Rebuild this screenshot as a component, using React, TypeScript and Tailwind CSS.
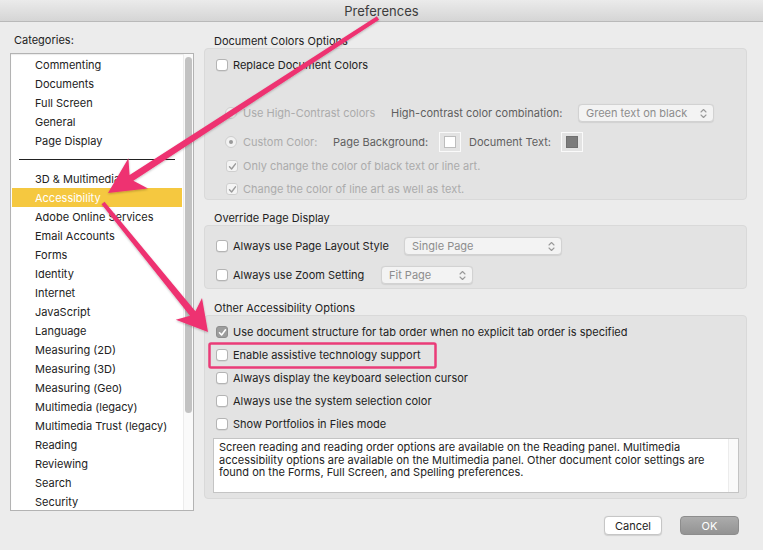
import React from "react";

const FONT = "font-['Inter','Liberation_Sans',Arial,sans-serif]";

function Check({ state = "off" }: { state?: "off" | "on" | "dis-on" }) {
  if (state === "on") {
    return (
      <span className="w-[12px] h-[12px] rounded-[3px] bg-[#9d9d9d] border border-[#8e8e8e] flex items-center justify-center shrink-0">
        <svg width="9" height="9" viewBox="0 0 9 9">
          <path d="M1.5 4.8 L3.6 7 L7.5 1.8" stroke="#fff" strokeWidth="1.6" fill="none" strokeLinecap="round" strokeLinejoin="round" />
        </svg>
      </span>
    );
  }
  if (state === "dis-on") {
    return (
      <span className="w-[12px] h-[12px] rounded-[3px] bg-[#f4f4f4] border border-[#cfcfcf] flex items-center justify-center shrink-0">
        <svg width="9" height="9" viewBox="0 0 9 9">
          <path d="M1.5 4.8 L3.6 7 L7.5 1.8" stroke="#9a9a9a" strokeWidth="1.4" fill="none" strokeLinecap="round" strokeLinejoin="round" />
        </svg>
      </span>
    );
  }
  return <span className="w-[12px] h-[12px] rounded-[3px] bg-white border border-[#b4b4b4] shadow-[0_0.5px_0.5px_rgba(0,0,0,0.12)] shrink-0" />;
}

function Radio({ dot = false }: { dot?: boolean }) {
  return (
    <span className="w-[12px] h-[12px] rounded-full bg-[#f2f2f2] border border-[#cdcdcd] flex items-center justify-center shrink-0">
      {dot && <span className="w-[4px] h-[4px] rounded-full bg-[#9a9a9a]" />}
    </span>
  );
}

function Updown() {
  return (
    <svg width="7" height="11" viewBox="0 0 7 11">
      <path d="M1 4 L3.5 1.5 L6 4" stroke="#9a9a9a" strokeWidth="1.1" fill="none" strokeLinecap="round" strokeLinejoin="round" />
      <path d="M1 7 L3.5 9.5 L6 7" stroke="#9a9a9a" strokeWidth="1.1" fill="none" strokeLinecap="round" strokeLinejoin="round" />
    </svg>
  );
}

function Select({ label, w }: { label: string; w: string }) {
  return (
    <div className={`${w} h-[18px] rounded-[4px] border border-[#d2d2d2] bg-[#f3f3f3] shadow-[0_0.5px_1px_rgba(0,0,0,0.08)] flex items-center justify-between pl-[7px] pr-[6px] text-[#8d8d8d] text-[11px]`}>
      <span>{label}</span>
      <Updown />
    </div>
  );
}

function Swatch({ fill }: { fill: string }) {
  return (
    <span className="w-[22px] h-[20px] border border-[#fafafa] flex items-center justify-center shrink-0">
      <span className={`w-[12px] h-[12px] border ${fill}`} />
    </span>
  );
}

const items1 = ["Commenting", "Documents", "Full Screen", "General", "Page Display"];
const items2 = [
  "3D & Multimedia",
  "Accessibility",
  "Adobe Online Services",
  "Email Accounts",
  "Forms",
  "Identity",
  "Internet",
  "JavaScript",
  "Language",
  "Measuring (2D)",
  "Measuring (3D)",
  "Measuring (Geo)",
  "Multimedia (legacy)",
  "Multimedia Trust (legacy)",
  "Reading",
  "Reviewing",
  "Search",
  "Security",
];

function Row({ children, className = "" }: { children: React.ReactNode; className?: string }) {
  return <div className={`h-[20px] flex items-center ${className}`}>{children}</div>;
}

export default function App() {
  return (
    <div className={`${FONT} w-[763px] h-[550px] bg-[#ececec] relative overflow-hidden text-[11px] leading-[14px] text-[#222]`}>
      {/* title bar */}
      <div className="h-[22px] bg-gradient-to-b from-[#ebebeb] to-[#d5d5d5] border-b border-[#b9b9b9] flex items-center justify-center text-[13px] text-[#3c3c3c]">
        Preferences
      </div>

      <div className="flex">
        {/* left column */}
        <div className="w-[204px] pl-[10px] pt-[11px]">
          <div className="h-[14px] pl-[4px]">Categories:</div>
          <div className="mt-[6px] w-[184px] h-[458px] border border-[#b3b3b3] bg-white flex shadow-[inset_0_1px_1px_rgba(0,0,0,0.08)]">
            <div className="flex-1 pt-[1px] px-[1px]">
              {items1.map((t) => (
                <div key={t} className="h-[19px] flex items-center pl-[23px]">{t}</div>
              ))}
              <div className="h-[19px] flex items-center pl-[7px]">
                <div className="w-[156px] h-[1px] bg-[#222]" />
              </div>
              {items2.map((t) => (
                <div
                  key={t}
                  className={`h-[19px] flex items-center pl-[23px] ${t === "Accessibility" ? "bg-[#f5c840] text-white" : ""}`}
                >
                  {t}
                </div>
              ))}
            </div>
            <div className="w-[10px] border-l border-[#ececec] bg-[#fafafa] pt-[3px] flex justify-center">
              <div className="w-[7px] h-[356px] rounded-full bg-[#c2c2c2]" />
            </div>
          </div>
        </div>

        {/* right column */}
        <div className="w-[543px] pt-[12px]">
          <div className="h-[14px] pl-[10px]">Document Colors Options</div>
          <div className="h-[152px] rounded-[4px] border border-[#d9d9d9] bg-[#e3e3e3] pt-[6px]">
            <Row className="pl-[11px] gap-[5px]">
              <Check />
              <span>Replace Document Colors</span>
            </Row>
            <Row className="mt-[28px] pl-[20px]">
              <span className="w-[166px] flex items-center gap-[6px]">
                <Radio />
                <span className="text-[#ababab]">Use High-Contrast colors</span>
              </span>
              <span className="w-[187px] text-[#5f5f5f]">High-contrast color combination:</span>
              <Select label="Green text on black" w="w-[136px]" />
            </Row>
            <Row className="mt-[9px] pl-[20px]">
              <span className="w-[108px] flex items-center gap-[6px]">
                <Radio dot />
                <span className="text-[#ababab]">Custom Color:</span>
              </span>
              <span className="w-[106px] text-[#5f5f5f]">Page Background:</span>
              <Swatch fill="bg-white border-[#bdbdbd]" />
              <span className="ml-[8px] w-[92px] text-[#5f5f5f]">Document Text:</span>
              <Swatch fill="bg-[#7b7b7b] border-[#6f6f6f]" />
            </Row>
            <Row className="mt-[4px] pl-[21px] gap-[5px]">
              <Check state="dis-on" />
              <span className="text-[#ababab]">Only change the color of black text or line art.</span>
            </Row>
            <Row className="mt-[3px] pl-[21px] gap-[5px]">
              <Check state="dis-on" />
              <span className="text-[#ababab]">Change the color of line art as well as text.</span>
            </Row>
          </div>

          <div className="mt-[11px] h-[14px] pl-[10px]">Override Page Display</div>
          <div className="h-[64px] rounded-[4px] border border-[#d9d9d9] bg-[#e3e3e3] pt-[10px]">
            <Row className="pl-[11px]">
              <span className="w-[188px] flex items-center gap-[5px]">
                <Check />
                <span>Always use Page Layout Style</span>
              </span>
              <Select label="Single Page" w="w-[158px]" />
            </Row>
            <Row className="mt-[9px] pl-[11px]">
              <span className="w-[165px] flex items-center gap-[5px]">
                <Check />
                <span>Always use Zoom Setting</span>
              </span>
              <Select label="Fit Page" w="w-[92px]" />
            </Row>
          </div>

          <div className="mt-[12px] h-[14px] pl-[10px]">Other Accessibility Options</div>
          <div className="h-[184px] rounded-[4px] border border-[#d9d9d9] bg-[#e3e3e3] pt-[6px]">
            {[
              ["Use document structure for tab order when no explicit tab order is specified", "on"],
              ["Enable assistive technology support", "off"],
              ["Always display the keyboard selection cursor", "off"],
              ["Always use the system selection color", "off"],
              ["Show Portfolios in Files mode", "off"],
            ].map(([t, s], i) => (
              <Row key={t} className={`pl-[11px] gap-[5px] ${i > 0 ? "mt-[3px]" : ""}`}>
                <Check state={s as "on" | "off"} />
                <span>{t}</span>
              </Row>
            ))}
            <div className="mt-[4px] ml-[8px] w-[526px] h-[55px] bg-white border border-[#c4c4c4] flex">
              <div className="flex-1 pl-[5px] pt-[2px] leading-[12.5px] text-[#222]">
                Screen reading and reading order options are available on the Reading panel. Multimedia accessibility options are available on the Multimedia panel. Other document color settings are found on the Forms, Full Screen, and Spelling preferences.
              </div>
              <div className="w-[10px] border-l border-[#ececec] bg-[#fafafa]" />
            </div>
          </div>

          <div className="mt-[17px] flex justify-end gap-[18px] pr-[8px]">
            <button className="w-[58px] h-[19px] rounded-[4px] bg-white border border-[#c6c6c6] shadow-[0_0.5px_1px_rgba(0,0,0,0.12)] text-[11px] text-[#222] flex items-center justify-center">
              Cancel
            </button>
            <button className="w-[59px] h-[19px] rounded-[4px] bg-gradient-to-b from-[#acacac] to-[#939393] border border-[#8d8d8d] text-[11px] text-white flex items-center justify-center">
              OK
            </button>
          </div>
        </div>
      </div>

      {/* annotations overlay */}
      <svg className="absolute left-0 top-0 pointer-events-none" width="763" height="550" viewBox="0 0 763 550">
        <defs>
          <filter id="sh" x="-10%" y="-10%" width="120%" height="120%">
            <feDropShadow dx="0" dy="1" stdDeviation="1" floodColor="#000" floodOpacity="0.25" />
          </filter>
        </defs>
        <g fill="#ee3371" filter="url(#sh)">
          <polygon points="376.9,16.3 129.6,174.9 128.4,158.3 108,193 148,188.5 133.4,180.7 379.1,19.7" />
          <polygon points="101.5,204.3 190,315.7 175.8,319.7 208,332 202,298.1 195.4,311.3 104.5,201.7" />
        </g>
        <rect x="209.5" y="343.5" width="226" height="24" rx="1.5" fill="none" stroke="#ea3c78" strokeWidth="2.5" />
      </svg>
    </div>
  );
}
